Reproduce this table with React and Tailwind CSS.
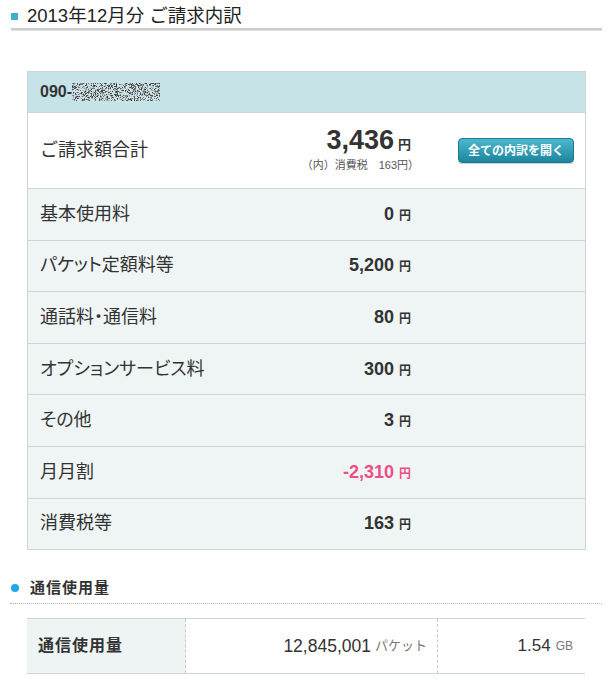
const jp = { fontFamily: '"Liberation Sans", "Noto Sans CJK JP", sans-serif' };

const rows = [
  { label: "基本使用料", value: "0" },
  { label: "パケット定額料等", value: "5,200" },
  { label: "通話料・通信料", value: "80" },
  { label: "オプションサービス料", value: "300" },
  { label: "その他", value: "3" },
  { label: "月月割", value: "-2,310", minus: true },
  { label: "消費税等", value: "163" },
];

// masked phone number (noise pattern)
function Mosaic() {
  let seed = 7;
  const rnd = () => {
    seed = (seed * 9301 + 49297) % 233280;
    return seed / 233280;
  };
  const dots = [];
  for (let y = 0; y < 18; y++) {
    for (let x = 0; x < 88; x++) {
      const r = rnd();
      if (r < 0.5) {
        const g = Math.floor(50 + rnd() * 150);
        dots.push(
          <rect key={x + "-" + y} x={x} y={y} width="1" height="1" fill={`rgb(${g},${g},${g})`} />
        );
      }
    }
  }
  return (
    <svg width="88" height="18" viewBox="0 0 88 18" className="block">
      {dots}
    </svg>
  );
}

function Row({ label, value, minus }) {
  return (
    <div className="flex items-center h-[51.6px] border-t border-[#cfd4d6] bg-[#eff4f5] pl-[12px]">
      <div className="w-[250px] text-[18px] text-[#333] [font-feature-settings:'palt']">{label}</div>
      <div className="w-[121px] text-right">
        <span className={"text-[18px] font-bold " + (minus ? "text-[#ee4d86]" : "text-[#333]")}>{value}</span>
        <span className={"ml-[5px] text-[12px] font-bold " + (minus ? "text-[#ee4d86]" : "text-[#333]")}>円</span>
      </div>
    </div>
  );
}

export default function App() {
  return (
    <div className="w-[610px] h-[680px] bg-white overflow-hidden text-[#333]" style={jp}>
      {/* page title */}
      <div className="flex items-center pl-[11px] pt-[5px] h-[27px]">
        <div className="w-[7px] h-[7px] bg-[#3ab0c9]" />
        <h1 className="ml-[9px] text-[18.5px] leading-none text-[#222]">2013年12月分 ご請求内訳</h1>
      </div>
      <div className="ml-[11px] w-[591px] h-[3px] mt-[1px] bg-[#cccccc] border-b border-[#e2e2e2]" />

      {/* bill table */}
      <div className="ml-[27px] mt-[40px] w-[559px] border border-[#cfd4d6]">
        <div className="flex items-center h-[40px] bg-[#c6e4e8] pl-[12px]">
          <span className="text-[16px] font-bold text-[#333]">090-</span>
          <Mosaic />
        </div>
        <div className="flex items-center h-[76px] border-t border-[#cfd4d6] bg-white pl-[12px]">
          <div className="w-[250px] text-[18px] text-[#333]">ご請求額合計</div>
          <div className="w-[121px] flex flex-col items-end">
            <div className="leading-none">
              <span className="text-[27px] font-bold text-[#333]">3,436</span>
              <span className="ml-[4px] text-[13px] font-bold text-[#333]">円</span>
            </div>
            <div className="mt-[3px] mr-[-8px] text-[11px] text-[#555] whitespace-nowrap">（内）消費税　163円）</div>
          </div>
          <button className="ml-auto mr-[11px] w-[116px] h-[25px] rounded-[4px] border border-[#1b7d93] bg-gradient-to-b from-[#4cb7cd] to-[#1a86a0] text-white text-[12px] font-bold shadow-[0_1px_1px_rgba(0,0,0,0.2)]">
            全ての内訳を開く
          </button>
        </div>
        {rows.map(r => (
          <Row key={r.label} {...r} />
        ))}
      </div>

      {/* data usage */}
      <div className="mt-[31px] flex items-center pl-[11px] h-[14px]">
        <div className="w-[8px] h-[8px] rounded-full bg-[#1ea9e8]" />
        <h2 className="ml-[11px] text-[15px] font-bold text-[#333] tracking-[1px]">通信使用量</h2>
      </div>
      <div className="ml-[10px] w-[592px] mt-[8px] border-t border-dotted border-[#b5b5b5]" />
      <div className="ml-[27px] mt-[14px] w-[558px] flex h-[56px] border-t border-b border-[#cfd4d6]">
        <div className="w-[159px] bg-[#eef3f4] border-r border-dashed border-[#c9c9c9] flex items-center pl-[11px]">
          <span className="text-[16px] font-bold text-[#333] tracking-[1px]">通信使用量</span>
        </div>
        <div className="w-[252px] border-r border-dashed border-[#c9c9c9] flex items-center justify-end pr-[10px]">
          <span className="text-[17.5px] text-[#333]">12,845,001</span>
          <span className="ml-[4px] text-[13px] text-[#777]">パケット</span>
        </div>
        <div className="flex-1 flex items-center justify-end pr-[12px]">
          <span className="text-[17px] text-[#333]">1.54</span>
          <span className="ml-[5px] text-[12px] text-[#777]">GB</span>
        </div>
      </div>
    </div>
  );
}
